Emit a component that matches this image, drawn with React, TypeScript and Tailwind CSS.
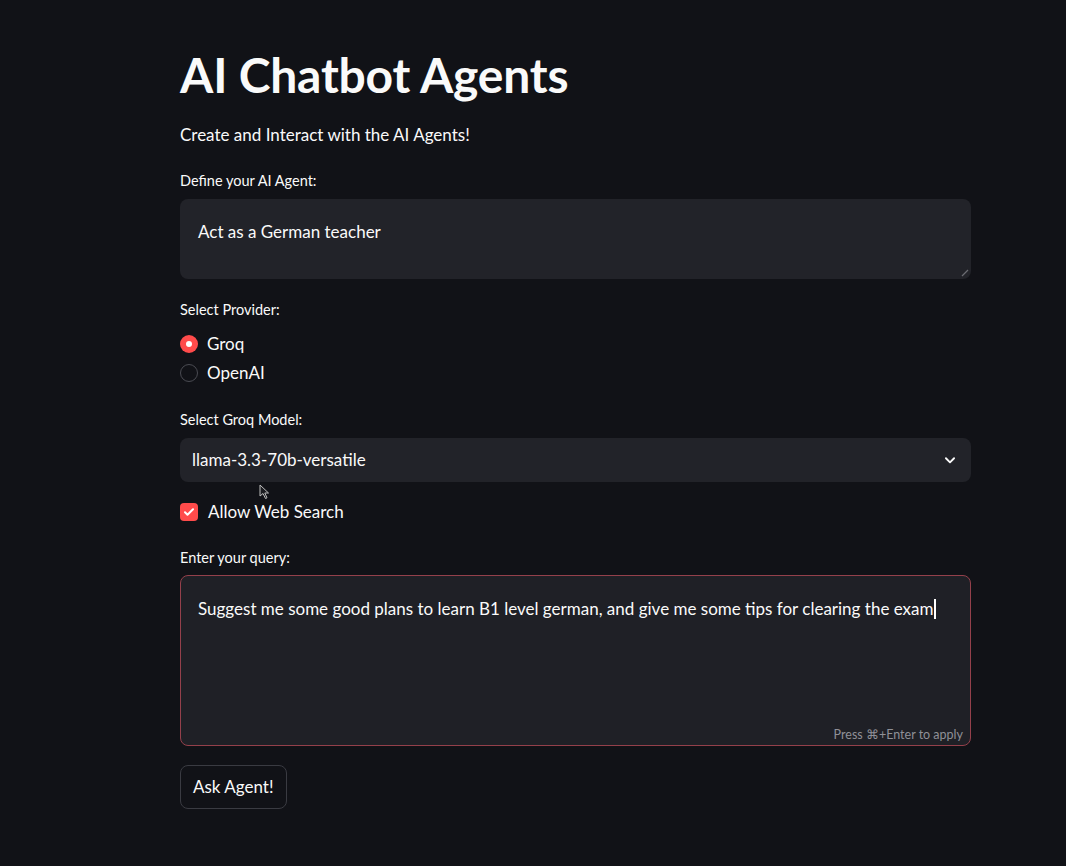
import React from "react";

export default function App() {
  return (
    <div
      className="min-h-[866px] w-full bg-[#111217] text-[#fafafa]"
      style={{ fontFamily: "Lato, 'Noto Sans', sans-serif" }}
    >
      <div className="ml-[180px] w-[791px] pt-[47px] pb-[58px]">
        <h1 className="text-[48px] font-bold leading-[56px] tracking-[-0.2px]">AI Chatbot Agents</h1>
        <p className="mt-[20px] text-[17px] leading-[24px]">Create and Interact with the AI Agents!</p>

        <label className="mt-[24px] block text-[14.5px] leading-[20px]">Define your AI Agent:</label>
        <div className="relative mt-[8px] h-[80px] rounded-[8px] bg-[#222329] px-[18px] pt-[21px] text-[17px] leading-[24px]">
          Act as a German teacher
          <svg className="absolute bottom-[2px] right-[2px]" width="8" height="8" viewBox="0 0 8 8">
            <path d="M7 1 L1 7" stroke="#6b6c72" strokeWidth="1.2" />
          </svg>
        </div>

        <label className="mt-[21px] block text-[14.5px] leading-[20px]">Select Provider:</label>
        <div className="mt-[14px] flex flex-col gap-[9px]">
          <div className="flex items-center gap-[9px] text-[17px] leading-[20px]">
            <span className="flex h-[18px] w-[18px] items-center justify-center rounded-full bg-[#ff4b4b]">
              <span className="h-[6px] w-[6px] rounded-full bg-white" />
            </span>
            Groq
          </div>
          <div className="flex items-center gap-[9px] text-[17px] leading-[20px]">
            <span className="h-[18px] w-[18px] rounded-full border-[1.5px] border-[#4a4b52]" />
            OpenAI
          </div>
        </div>

        <label className="mt-[27px] block text-[14.5px] leading-[20px]">Select Groq Model:</label>
        <div className="relative mt-[8px] flex h-[44px] items-center justify-between rounded-[8px] bg-[#222329] pl-[12px] pr-[14px] text-[17px]">
          <span>llama-3.3-70b-versatile</span>
          <svg width="14" height="14" viewBox="0 0 24 24" fill="none" stroke="#fafafa" strokeWidth="3.2" strokeLinecap="round" strokeLinejoin="round">
            <path d="M5 9l7 7 7-7" />
          </svg>
          <svg className="absolute left-[79px] top-[46px]" width="12" height="16" viewBox="0 0 12 16">
            <path d="M1 1 L1 12 L4 9.5 L6.5 14.5 L8 13.8 L5.8 9 L9.5 9 Z" fill="#1b1c20" stroke="#bdbdbd" strokeWidth="1" />
          </svg>
        </div>

        <div className="mt-[19px] flex items-center gap-[10px] text-[17px] leading-[22px]">
          <span className="flex h-[18px] w-[18px] items-center justify-center rounded-[4px] bg-[#ff4b4b]">
            <svg width="12" height="12" viewBox="0 0 24 24" fill="none" stroke="white" strokeWidth="4" strokeLinecap="round" strokeLinejoin="round">
              <path d="M4 12.5l5 5L20 6.5" />
            </svg>
          </span>
          Allow Web Search
        </div>

        <label className="mt-[25px] block text-[14.5px] leading-[20px]">Enter your query:</label>
        <div className="relative mt-[7px] h-[171px] rounded-[8px] border border-[#94404b] bg-[#1f2026] px-[17px] pt-[19px] text-[17px] leading-[24px]">
          <span>Suggest me some good plans to learn B1 level german, and give me some tips for clearing the exam</span>
          <span className="ml-[1px] inline-block h-[20px] w-[1.5px] translate-y-[4px] bg-white" />
          <span className="absolute bottom-[2px] right-[7px] text-[12.5px] leading-[16px] text-[#8f9097]">Press ⌘+Enter to apply</span>
        </div>

        <button className="mt-[19px] h-[44px] rounded-[8px] border border-[#3a3b42] bg-[#111217] px-[12px] text-[17px] text-[#fafafa]">
          Ask Agent!
        </button>
      </div>
    </div>
  );
}
